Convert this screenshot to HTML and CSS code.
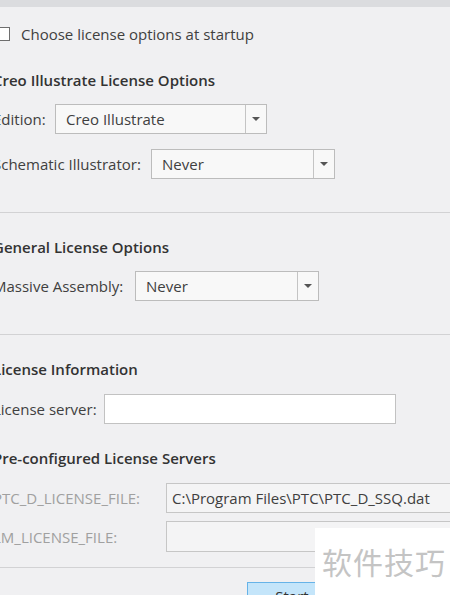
FILE: index.html
```html
<!DOCTYPE html>
<html>
<head>
<meta charset="utf-8">
<link rel="stylesheet" href="styles.css">
</head>
<body>
<div class="topbar"></div>
<div class="content">
  <div class="check-row">
    <span class="checkbox"></span>
    <span class="check-label">Choose license options at startup</span>
  </div>

  <div class="heading h1">Creo Illustrate License Options</div>
  <div class="row r-edition">
    <span class="label w-edition">Edition:</span>
    <div class="select s-edition"><span class="value">Creo Illustrate</span><span class="arrow"><span class="tri"></span></span></div>
  </div>
  <div class="row r-schem">
    <span class="label w-schem">Schematic Illustrator:</span>
    <div class="select s-short"><span class="value">Never</span><span class="arrow"><span class="tri"></span></span></div>
  </div>
  <div class="divider d1"></div>

  <div class="heading h2">General License Options</div>
  <div class="row r-massive">
    <span class="label w-massive">Massive Assembly:</span>
    <div class="select s-short"><span class="value">Never</span><span class="arrow"><span class="tri"></span></span></div>
  </div>
  <div class="divider d2"></div>

  <div class="heading h2">License Information</div>
  <div class="row r-server">
    <span class="label w-server">License server:</span>
    <div class="input"></div>
  </div>

  <div class="heading h2">Pre-configured License Servers</div>
  <div class="row r-ptc">
    <span class="label dim w-file">PTC_D_LICENSE_FILE:</span>
    <div class="field">C:\Program Files\PTC\PTC_D_SSQ.dat</div>
  </div>
  <div class="row r-lm">
    <span class="label dim w-file">LM_LICENSE_FILE:</span>
    <div class="field tall"></div>
  </div>
  <div class="divider d3"></div>

  <div class="btn-row">
    <div class="btn">Start</div>
  </div>
</div>
<div class="watermark">软件技巧</div>
</body>
</html>
```

FILE: styles.css
```css
html, body {
  margin: 0;
  padding: 0;
  width: 450px;
  height: 595px;
  overflow: hidden;
  background: #f0f0f2;
  font-family: "Open Sans", "Noto Sans", sans-serif;
  font-size: 15px;
  color: #404040;
}

.topbar {
  height: 7px;
  background: #dbdcdf;
}

.content {
  margin-left: -7px;
  display: flex;
  flex-direction: column;
}

.check-row {
  margin-top: 20px;
  height: 14px;
  display: flex;
  align-items: center;
}

.checkbox {
  width: 12px;
  height: 12px;
  border: 1px solid #6e6e6e;
  background: #ffffff;
  margin-left: 3px;
  flex: none;
}

.check-label {
  margin-left: 11px;
  line-height: 20px;
}

.heading {
  font-weight: 600;
  height: 20px;
  line-height: 20px;
  color: #333;
}

.h1 { margin-top: 29px; }
.h2 { margin-top: 24px; }

.row {
  display: flex;
  align-items: center;
  height: 30px;
}

.r-edition { margin-top: 14px; }
.r-schem { margin-top: 15px; }
.r-massive { margin-top: 14px; }
.r-server { margin-top: 15px; }
.r-ptc { margin-top: 15px; }
.r-lm { margin-top: 8px; height: 31px; }

.label {
  flex: none;
  white-space: nowrap;
}
.label.dim { color: #a0a0a0; }

.w-edition { width: 62px; }
.w-schem { width: 158px; }
.w-massive { width: 142px; }
.w-server { width: 111px; }
.w-file { width: 173px; }

.select {
  box-sizing: border-box;
  height: 30px;
  border: 1px solid #bcbcbc;
  background: #f8f8f8;
  display: flex;
  align-items: stretch;
  flex: none;
}
.s-edition { width: 212px; }
.s-short { width: 184px; }

.select .value {
  flex: 1;
  padding-left: 10px;
  line-height: 28px;
  color: #404040;
}

.select .arrow {
  width: 20px;
  border-left: 1px solid #c4c4c4;
  display: flex;
  align-items: center;
  justify-content: center;
}

.tri {
  width: 0;
  height: 0;
  border-left: 4px solid transparent;
  border-right: 4px solid transparent;
  border-top: 4px solid #555;
}

.input {
  box-sizing: border-box;
  width: 292px;
  height: 30px;
  border: 1px solid #c2c2c2;
  background: #ffffff;
  flex: none;
}

.field {
  box-sizing: border-box;
  width: 300px;
  height: 30px;
  border: 1px solid #c6c6c6;
  background: #f4f4f5;
  padding-left: 5px;
  line-height: 28px;
  color: #404040;
  white-space: nowrap;
  flex: none;
}
.field.tall { height: 31px; }

.divider {
  height: 1px;
  background: #d2d2d4;
  margin-right: -20px;
}
.d1 { margin-top: 33px; }
.d2 { margin-top: 33px; }
.d3 { margin-top: 15px; }

.btn-row {
  margin-top: 14px;
  padding-left: 254px;
}

.btn {
  box-sizing: border-box;
  width: 90px;
  height: 28px;
  background: #c4e5fa;
  border: 1px solid #66b3e8;
  text-align: center;
  line-height: 26px;
  color: #333;
}

.watermark {
  position: absolute;
  left: 315px;
  top: 528px;
  width: 135px;
  height: 67px;
  background: #ffffff;
  font-family: "Noto Sans CJK SC", sans-serif;
  font-size: 30px;
  line-height: 67px;
  color: #c4c4c4;
  padding-left: 7px;
  box-sizing: border-box;
  letter-spacing: 1px;
}
```
